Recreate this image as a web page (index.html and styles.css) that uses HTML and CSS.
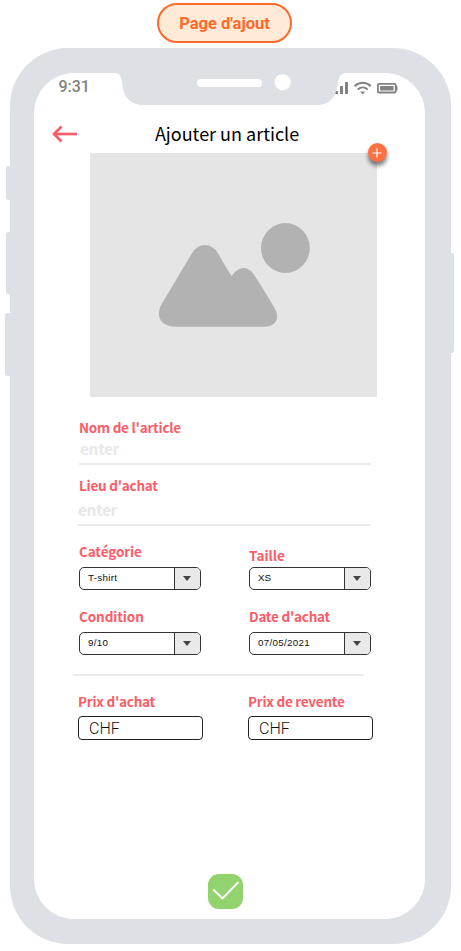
FILE: index.html
```html
<!DOCTYPE html>
<html lang="fr">
<head>
<meta charset="utf-8">
<title>Page d'ajout</title>
<link rel="stylesheet" href="styles.css">
</head>
<body>
<div class="badge"><span class="badge-text">Page d'ajout</span></div>
<main class="phone">
  <span class="side side-mute"></span>
  <span class="side side-up"></span>
  <span class="side side-down"></span>
  <span class="side side-power"></span>
  <div class="screen">
    <div class="status">
      <span class="time">9:31</span>
      <svg class="status-icons" width="64" height="16" viewBox="0 0 64 16">
        <g fill="#828282">
          <path d="M1 10h3v3H1zM6 5h3v8H6zM11 1h3v12h-3z"/>
          <path d="M26.200 10.600h5l-2.500 2.800z"/>
        </g>
        <g fill="none" stroke="#828282">
          <path d="M20.600 5.200c4.700-4.600 11.500-4.600 16.200 0M23.700 8.600c3-2.900 7-2.900 10 0" stroke-width="2"/>
          <rect x="43.900" y="2.900" width="17.800" height="8.600" rx="1" stroke-width="1.800"/>
        </g>
        <path d="M46.100 5.100h13.400v4.300H46.100zM62 4.200l1.500 1.500v3L62 10.200z" fill="#828282"/>
      </svg>
      <svg class="notch" width="232" height="34" viewBox="114 72 232 34">
        <path fill="#dde1e6" d="M114 72V73H115Q121 73.500 122 81C122.500 96 130 105 143 105H318C330 105 337 96 338 82Q339 73.500 346 73V72Z"/>
        <rect x="197" y="79" width="65" height="8" rx="4" fill="#fff"/>
        <circle cx="282.700" cy="82.300" r="8.100" fill="#fff"/>
      </svg>
    </div>
    <header class="header">
      <svg class="back" width="26" height="18" viewBox="0 0 26 18" fill="none" stroke="#fa5d68">
        <path d="M2 9H25" stroke-width="2.700"/><path d="M9.500 1.500L2 9l7.500 7.500" stroke-width="2.700"/>
      </svg>
      <h1 class="title">Ajouter un article</h1>
    </header>
    <div class="photo">
      <svg width="287" height="244" viewBox="89 153 287 244" fill="#b2b2b2">
        <path d="M161 303.500L190.500 254C197.500 242 210.500 242 217.500 254Q225 268 230.800 276C237 267 245.500 264.500 252.500 274Q265 293 274 309C279 319 275 326.700 263 326.700H175C159 326.700 154 315 161 303.500Z"/>
        <ellipse cx="284.400" cy="248" rx="24.400" ry="24.900"/>
      </svg>
      <span class="add"><svg width="10" height="10" viewBox="0 0 10 10" stroke="#fff" stroke-width="1.200"><path d="M0.500 5H9.500M5 .5V9.500"/></svg></span>
    </div>
    <form class="form">
      <div class="field">
        <span class="label name-label">Nom de l'article</span>
        <span class="placeholder">enter</span>
      </div>
      <div class="field place">
        <span class="label place-label">Lieu d'achat</span>
        <span class="placeholder">enter</span>
      </div>
      <div class="selects">
        <div class="cell"><span class="label category">Catégorie</span><div class="select"><span class="value shirt">T-shirt</span><span class="drop"><i class="caret"></i></span></div></div>
        <div class="cell size-cell"><span class="label size">Taille</span><div class="select"><span class="value size-value">XS</span><span class="drop"><i class="caret"></i></span></div></div>
        <div class="cell"><span class="label condition">Condition</span><div class="select"><span class="value">9/10</span><span class="drop"><i class="caret"></i></span></div></div>
        <div class="cell"><span class="label date">Date d'achat</span><div class="select"><span class="value">07/05/2021</span><span class="drop"><i class="caret"></i></span></div></div>
      </div>
      <div class="divider"></div>
      <div class="prices">
        <div class="cell"><span class="label buy">Prix d'achat</span><div class="price">CHF</div></div>
        <div class="cell"><span class="label sell">Prix de revente</span><div class="price">CHF</div></div>
      </div>
    </form>
    <div class="confirm">
      <svg width="35" height="35" viewBox="0 0 35 35" fill="none" stroke="#fff" stroke-width="1.900"><path d="M5.300 15.500l9.200 9L30.500 8"/></svg>
    </div>
  </div>
</main>
</body>
</html>
```
FILE: styles.css
```css
* { box-sizing: border-box; }
body {
  margin: 0;
  padding-top: 3px;
  height: 951px;
  overflow: hidden;
  background: #fff;
  font-family: "Noto Sans CJK SC", "Noto Sans", sans-serif;
}
.badge {
  width: 135px;
  height: 40px;
  margin-left: 157px;
  border: 2px solid #ff6a2c;
  border-radius: 20px;
  background: #ffead7;
  display: flex;
  align-items: center;
  justify-content: center;
  font: 700 16.5px/20px Roboto, sans-serif;
  color: #ff6a2c;
}
.badge-text { margin-top: 1px; }
.phone {
  position: relative;
  width: 440.500px;
  height: 896px;
  margin: 5px 0 0 10px;
  padding: 25.300px 25.500px 25px 24.400px;
  border-radius: 58px;
  background: #dde1e6;
}
.side { position: absolute; background: #dde1e6; border-radius: 2px 0 0 2px; }
.side-mute { left: -4px; top: 118px; width: 4px; height: 34px; }
.side-up { left: -4px; top: 184px; width: 4px; height: 62px; }
.side-down { left: -5px; top: 265px; width: 5px; height: 63px; }
.side-power { right: -3.500px; top: 205px; width: 4px; height: 100px; border-radius: 0 2px 2px 0; }
.screen {
  height: 100%;
  border-radius: 40px;
  background: #fff;
  display: flex;
  flex-direction: column;
}
.status {
  position: relative;
  height: 31.700px;
  padding: 3.700px 27px 0 24px;
  display: flex;
  justify-content: space-between;
}
.time { font: 500 16px/20px Roboto, sans-serif; color: #828282; }
.status-icons { margin-top: 4px; }
.notch { position: absolute; left: 79.600px; top: -1.300px; }
.header {
  height: 48px;
  padding-left: 17.500px;
  display: flex;
  align-items: center;
}
.back { margin-top: 11px; }
.title {
  margin: 8px 0 0 77px;
  font-size: 18px;
  line-height: 28px;
  font-weight: 400;
  color: #000;
  white-space: nowrap;
}
.photo {
  position: relative;
  width: 287px;
  height: 244px;
  margin-left: 55.200px;
  background: #e5e5e5;
}
.photo svg { display: block; }
.add {
  position: absolute;
  right: -10px;
  top: -9.500px;
  width: 19px;
  height: 19px;
  border-radius: 50%;
  background: #ff7043;
  box-shadow: 0 4px 4px rgba(0, 0, 0, .5);
  display: flex;
  align-items: center;
  justify-content: center;
}
.form { padding: 20px 0 0 44.600px; }
.label {
  display: block;
  font-size: 13.500px;
  line-height: 20px;
  font-weight: 700;
  letter-spacing: -.24px;
  color: #fa5d68;
  white-space: nowrap;
}
.field {
  width: 292px;
  height: 48px;
  border-bottom: 2px solid #ebebeb;
}
.placeholder {
  display: block;
  font-size: 15.500px;
  line-height: 22px;
  font-weight: 700;
  letter-spacing: -.4px;
  padding-left: 1px;
  color: #e8e8e8;
}
.place { height: 51px; margin: 10px 0 0 -1px; }
.place .label { margin-left: 1px; }
.place .placeholder { margin-top: 3px; padding-left: 0; }
.selects {
  display: grid;
  grid-template-columns: 122px 122px;
  column-gap: 48px;
  row-gap: 16px;
  padding-top: 15px;
}
.cell .select { margin-top: 6px; }
.size-cell { padding-top: 4px; }
.size-cell .select { margin-top: 2px; }
.size { letter-spacing: 0; }
.category, .condition { letter-spacing: -.1px; }
.select {
  height: 23px;
  border: 1px solid #333;
  border-radius: 5px;
  display: flex;
  overflow: hidden;
}
.value {
  flex: 1;
  padding-left: 8px;
  font: 9.800px/20px "Liberation Sans", sans-serif;
  letter-spacing: .3px;
  color: #111;
}
.size-value { letter-spacing: 0; }
.drop {
  width: 26px;
  border-left: 1px solid #333;
  background: #e9e9e9;
  display: flex;
  align-items: center;
  justify-content: center;
}
.caret {
  border: 4.500px solid transparent;
  border-top: 5px solid #444;
  border-bottom: 0;
}
.divider { width: 291px; height: 2px; margin: 19px 0 0 -6px; background: #ebebeb; }
.prices {
  display: grid;
  grid-template-columns: 125px 125px;
  column-gap: 45px;
  margin: 15px 0 0 -1px;
}
.price {
  height: 24px;
  margin-top: 5px;
  padding-left: 10px;
  border: 1px solid #222;
  border-radius: 4px;
  font: 300 16px/23px Roboto, sans-serif;
  color: #111;
}
.confirm {
  width: 35px;
  height: 35px;
  margin: auto 0 10px 173.600px;
  border-radius: 11px;
  background: #93d36e;
}
.confirm svg { display: block; }
```
